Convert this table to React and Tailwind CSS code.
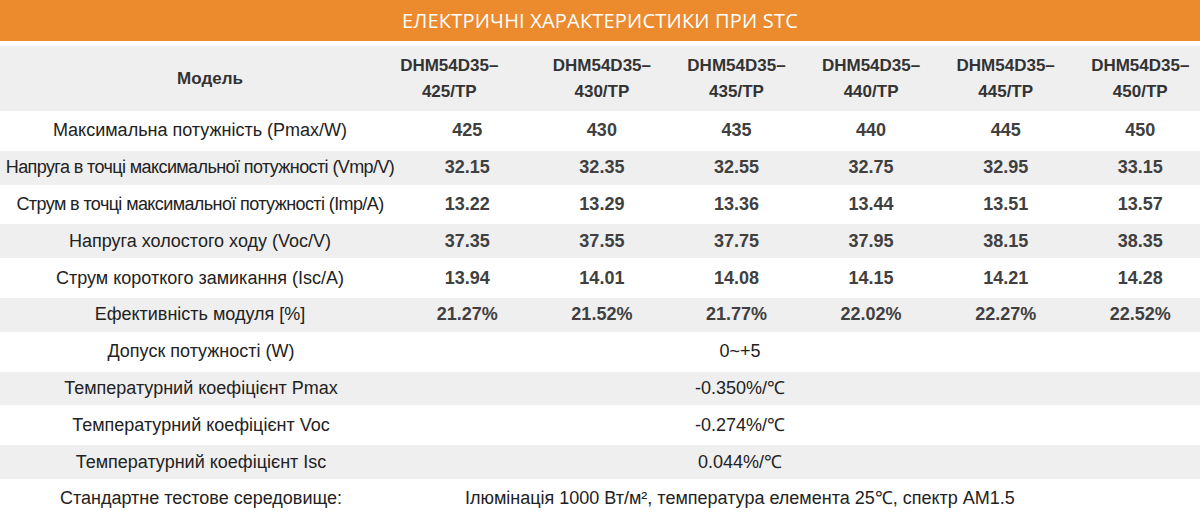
const models = ['425', '430', '435', '440', '445', '450']

const rows = [
  { label: 'Максимальна потужність (Pmax/W)', values: ['425', '430', '435', '440', '445', '450'] },
  { label: 'Напруга в точці максимальної потужності (Vmp/V)', values: ['32.15', '32.35', '32.55', '32.75', '32.95', '33.15'], tight: true },
  { label: 'Струм в точці максимальної потужності (Imp/A)', values: ['13.22', '13.29', '13.36', '13.44', '13.51', '13.57'], tight: true },
  { label: 'Напруга холостого ходу (Voc/V)', values: ['37.35', '37.55', '37.75', '37.95', '38.15', '38.35'] },
  { label: 'Струм короткого замикання (Isc/A)', values: ['13.94', '14.01', '14.08', '14.15', '14.21', '14.28'] },
  { label: 'Ефективність модуля [%]', values: ['21.27%', '21.52%', '21.77%', '22.02%', '22.27%', '22.52%'] },
]

const common = [
  { label: 'Допуск потужності (W)', value: '0~+5' },
  { label: 'Температурний коефіцієнт Pmax', value: '-0.350%/℃' },
  { label: 'Температурний коефіцієнт Voc', value: '-0.274%/℃' },
  { label: 'Температурний коефіцієнт Isc', value: '0.044%/℃' },
  { label: 'Стандартне тестове середовище:', value: 'Ілюмінація 1000 Вт/м², температура елемента 25℃, спектр AM1.5' },
]

export default function App() {
  return (
    <div className="w-[1200px] h-[520px] overflow-hidden bg-white text-[#222] font-['Liberation_Sans',Arial,sans-serif]">
      {/* title bar */}
      <div className="h-[41px] bg-[#ec8a2e] flex items-center justify-center">
        <h1 className="text-white text-[20px] font-['Open_Sans',sans-serif] tracking-[0.2px]">
          ЕЛЕКТРИЧНІ ХАРАКТЕРИСТИКИ ПРИ STC
        </h1>
      </div>

      {/* model header */}
      <div className="mt-[5px] h-[65px] bg-[#efefef] grid grid-cols-[400px_repeat(6,134.6px)] items-center text-[17px] font-bold text-[#333] leading-[26px]">
        <div className="pl-[20px] text-center">Модель</div>
        {models.map((m, i) => (
          <div key={m} className={`text-center whitespace-nowrap ${i === 0 ? 'translate-x-[-18px]' : ''}`}>
            <div>DHM54D35–</div>
            <div>{m}/TP</div>
          </div>
        ))}
      </div>

      <div className="mt-[3px] flex flex-col gap-[3px]">
        {rows.map((r, i) => (
          <div
            key={r.label}
            className={`h-[33.8px] grid grid-cols-[400px_repeat(6,134.6px)] items-center ${i % 2 ? 'bg-[#efefef]' : 'bg-white'}`}
          >
            <div className={`text-center text-[18px] whitespace-nowrap ${r.tight ? 'tracking-[-0.6px]' : ''}`}>
              {r.label}
            </div>
            {r.values.map((v, j) => (
              <div key={j} className="text-center text-[18px] font-bold text-[#404040]">
                {v}
              </div>
            ))}
          </div>
        ))}
        {common.map((r, i) => (
          <div
            key={r.label}
            className={`h-[33.8px] grid grid-cols-[402px_676px] items-center ${i % 2 ? 'bg-[#efefef]' : 'bg-white'}`}
          >
            <div className="text-center text-[18px] whitespace-nowrap">{r.label}</div>
            <div className="text-center text-[18px] whitespace-nowrap">{r.value}</div>
          </div>
        ))}
      </div>
    </div>
  )
}
